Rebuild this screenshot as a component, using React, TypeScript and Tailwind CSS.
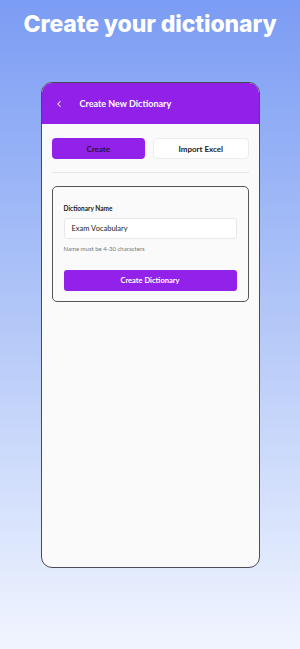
import { ChevronLeft } from 'lucide-react'

const App = () => {
  return (
    <div
      className="h-[649px] w-[300px] overflow-hidden bg-gradient-to-b from-[#7b9cf3] via-[#b4c8f8] to-[#f1f5fe] flex flex-col items-center"
      style={{ fontFamily: 'Lato, "Noto Sans", sans-serif' }}
    >
      <h1
        className="mt-[9px] text-[23px] font-extrabold leading-[30px] text-white tracking-[-0.1px]"
        style={{ fontFamily: 'Inter, "Noto Sans", sans-serif' }}
      >
        Create your dictionary
      </h1>

      <div className="mt-[43px] flex h-[486px] w-[219px] flex-col overflow-hidden rounded-[11px] border-[1.5px] border-[#4b4b55] bg-[#fafafa]">
        <header className="flex h-[41px] shrink-0 items-center bg-[#9121e8] pl-[12px]">
          <ChevronLeft className="size-[10px] text-white" strokeWidth={2.5} />
          <span className="ml-[16px] text-[9px] font-bold text-white">
            Create New Dictionary
          </span>
        </header>

        <main className="flex flex-col px-[10px] pt-[14px]">
          <div className="flex gap-[8px]">
            <button className="h-[21px] flex-1 rounded-[4px] bg-[#9222e9] text-[8px] font-bold text-[#2a1140]">
              Create
            </button>
            <button className="h-[21px] flex-1 rounded-[4px] border border-[#ececec] bg-white text-[8px] font-bold text-[#222]">
              Import Excel
            </button>
          </div>

          <div className="mt-[13px] h-px bg-[#e6e6e6]" />

          <section className="mt-[13px] flex flex-col rounded-[5px] border border-[#55555c] bg-[#fafafa] px-[11px] pb-[10px] pt-[17px]">
            <label className="text-[6.5px] font-bold text-[#222]">Dictionary Name</label>
            <div className="mt-[4px] flex h-[21px] items-center rounded-[3px] border border-[#e8e8e8] bg-white px-[7px] text-[7.5px] text-[#222]">
              Exam Vocabulary
            </div>
            <p className="mt-[5px] text-[6px] text-[#777]">Name must be 4-30 characters</p>
            <button className="mt-[17px] h-[21px] rounded-[3px] bg-[#9222e9] text-[7.5px] font-bold text-white">
              Create Dictionary
            </button>
          </section>
        </main>
      </div>
    </div>
  )
}

export default App
